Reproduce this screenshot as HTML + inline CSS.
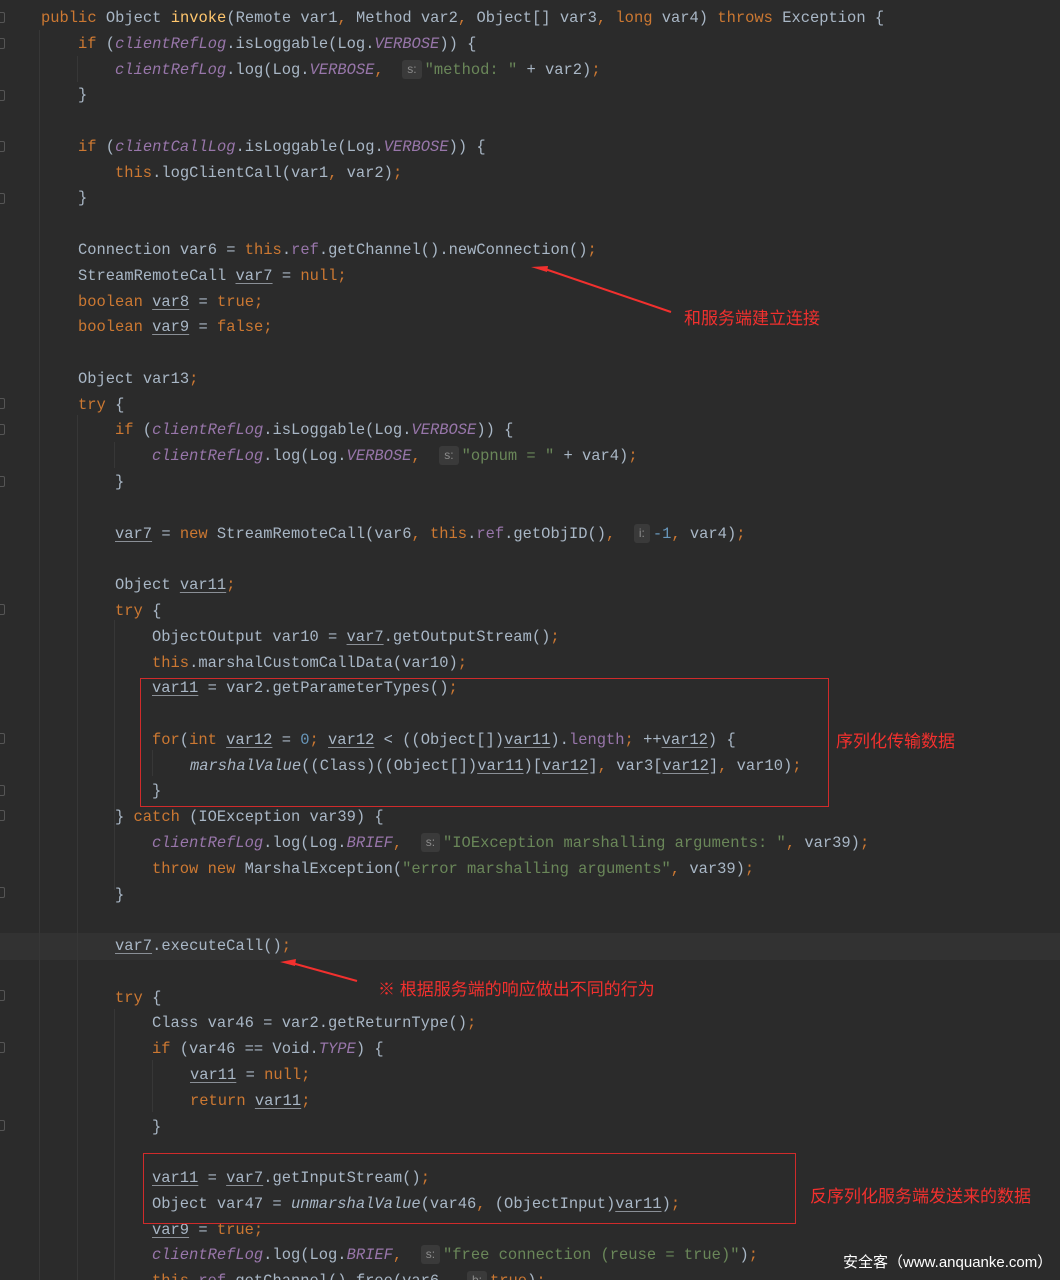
<!DOCTYPE html>
<html><head><meta charset="utf-8"><style>
html,body{margin:0;padding:0;background:#2b2b2b;width:1060px;height:1280px;overflow:hidden;position:relative}
.l{position:absolute;left:0;height:26px;line-height:26px;white-space:pre;font-family:"Liberation Mono",monospace;font-size:15.45px;color:#a9b7c6}
.k{color:#cc7832}.p{color:#9876aa;font-style:italic}.pf{color:#9876aa}.s{color:#6a8759}.n{color:#6897bb}.m{color:#ffc66d}.i{font-style:italic}
.u{text-decoration:underline;text-decoration-color:#8a8f96;text-underline-offset:3px}
.h{display:inline-block;background:#3a3a3a;color:#8c8c8c;font-family:"Liberation Sans",sans-serif;font-size:12px;line-height:19px;padding:0 5px;border-radius:3px;margin-right:3px;vertical-align:1px}
.g{position:absolute;width:1px;background:#373737}
.box{position:absolute;border:1px solid #d02b2b}
.a{position:absolute;color:#f2302e;font-family:"Liberation Sans","Noto Sans CJK SC",sans-serif;font-size:17px;white-space:nowrap}
.f{position:absolute;left:0;width:4px;height:9px;border:1px solid #555;border-left:none;border-radius:0 2px 2px 0}
</style></head><body>
<div style="position:absolute;left:0;top:933px;width:1060px;height:27px;background:#323232"></div>
<div class="g" style="left:39px;top:30px;height:1250px"></div>
<div class="g" style="left:77px;top:56px;height:26px"></div>
<div class="g" style="left:77px;top:415px;height:865px"></div>
<div class="g" style="left:114px;top:442px;height:26px"></div>
<div class="g" style="left:114px;top:620px;height:270px"></div>
<div class="g" style="left:114px;top:1009px;height:271px"></div>
<div class="g" style="left:152px;top:750px;height:26px"></div>
<div class="g" style="left:152px;top:1060px;height:52px"></div>
<div class="f" style="top:12px"></div><div class="f" style="top:38px"></div><div class="f" style="top:90px"></div>
<div class="f" style="top:141px"></div><div class="f" style="top:193px"></div><div class="f" style="top:398px"></div>
<div class="f" style="top:424px"></div><div class="f" style="top:476px"></div><div class="f" style="top:604px"></div>
<div class="f" style="top:733px"></div><div class="f" style="top:785px"></div><div class="f" style="top:810px"></div>
<div class="f" style="top:887px"></div><div class="f" style="top:990px"></div><div class="f" style="top:1042px"></div><div class="f" style="top:1120px"></div>

<div class="l" style="top:5px;left:41px"><span class="k">public </span>Object <span class="m">invoke</span>(Remote var1<span class="k">, </span>Method var2<span class="k">, </span>Object[] var3<span class="k">, long </span>var4) <span class="k">throws </span>Exception {</div>
<div class="l" style="top:31px;left:78px"><span class="k">if </span>(<span class="p">clientRefLog</span>.isLoggable(Log.<span class="p">VERBOSE</span>)) {</div>
<div class="l" style="top:57px;left:115px"><span class="p">clientRefLog</span>.log(Log.<span class="p">VERBOSE</span><span class="k">, </span> <span class="h">s:</span><span class="s">"method: "</span> + var2)<span class="k">;</span></div>
<div class="l" style="top:82px;left:78px">}</div>
<div class="l" style="top:134px;left:78px"><span class="k">if </span>(<span class="p">clientCallLog</span>.isLoggable(Log.<span class="p">VERBOSE</span>)) {</div>
<div class="l" style="top:160px;left:115px"><span class="k">this</span>.logClientCall(var1<span class="k">, </span>var2)<span class="k">;</span></div>
<div class="l" style="top:185px;left:78px">}</div>
<div class="l" style="top:237px;left:78px">Connection var6 = <span class="k">this</span>.<span class="pf">ref</span>.getChannel().newConnection()<span class="k">;</span></div>
<div class="l" style="top:263px;left:78px">StreamRemoteCall <span class="u">var7</span> = <span class="k">null;</span></div>
<div class="l" style="top:289px;left:78px"><span class="k">boolean </span><span class="u">var8</span> = <span class="k">true;</span></div>
<div class="l" style="top:314px;left:78px"><span class="k">boolean </span><span class="u">var9</span> = <span class="k">false;</span></div>
<div class="l" style="top:366px;left:78px">Object var13<span class="k">;</span></div>
<div class="l" style="top:392px;left:78px"><span class="k">try </span>{</div>
<div class="l" style="top:417px;left:115px"><span class="k">if </span>(<span class="p">clientRefLog</span>.isLoggable(Log.<span class="p">VERBOSE</span>)) {</div>
<div class="l" style="top:443px;left:152px"><span class="p">clientRefLog</span>.log(Log.<span class="p">VERBOSE</span><span class="k">, </span> <span class="h">s:</span><span class="s">"opnum = "</span> + var4)<span class="k">;</span></div>
<div class="l" style="top:469px;left:115px">}</div>
<div class="l" style="top:521px;left:115px"><span class="u">var7</span> = <span class="k">new </span>StreamRemoteCall(var6<span class="k">, this</span>.<span class="pf">ref</span>.getObjID()<span class="k">, </span> <span class="h">i:</span><span class="n">-1</span><span class="k">, </span>var4)<span class="k">;</span></div>
<div class="l" style="top:572px;left:115px">Object <span class="u">var11</span><span class="k">;</span></div>
<div class="l" style="top:598px;left:115px"><span class="k">try </span>{</div>
<div class="l" style="top:624px;left:152px">ObjectOutput var10 = <span class="u">var7</span>.getOutputStream()<span class="k">;</span></div>
<div class="l" style="top:650px;left:152px"><span class="k">this</span>.marshalCustomCallData(var10)<span class="k">;</span></div>
<div class="l" style="top:675px;left:152px"><span class="u">var11</span> = var2.getParameterTypes()<span class="k">;</span></div>
<div class="l" style="top:727px;left:152px"><span class="k">for</span>(<span class="k">int </span><span class="u">var12</span> = <span class="n">0</span><span class="k">; </span><span class="u">var12</span> &lt; ((Object[])<span class="u">var11</span>).<span class="pf">length</span><span class="k">; </span>++<span class="u">var12</span>) {</div>
<div class="l" style="top:753px;left:190px"><span class="i">marshalValue</span>((Class)((Object[])<span class="u">var11</span>)[<span class="u">var12</span>]<span class="k">, </span>var3[<span class="u">var12</span>]<span class="k">, </span>var10)<span class="k">;</span></div>
<div class="l" style="top:778px;left:152px">}</div>
<div class="l" style="top:804px;left:115px">} <span class="k">catch </span>(IOException var39) {</div>
<div class="l" style="top:830px;left:152px"><span class="p">clientRefLog</span>.log(Log.<span class="p">BRIEF</span><span class="k">, </span> <span class="h">s:</span><span class="s">"IOException marshalling arguments: "</span><span class="k">, </span>var39)<span class="k">;</span></div>
<div class="l" style="top:856px;left:152px"><span class="k">throw new </span>MarshalException(<span class="s">"error marshalling arguments"</span><span class="k">, </span>var39)<span class="k">;</span></div>
<div class="l" style="top:882px;left:115px">}</div>
<div class="l" style="top:933px;left:115px"><span class="u">var7</span>.executeCall()<span class="k">;</span></div>
<div class="l" style="top:985px;left:115px"><span class="k">try </span>{</div>
<div class="l" style="top:1010px;left:152px">Class var46 = var2.getReturnType()<span class="k">;</span></div>
<div class="l" style="top:1036px;left:152px"><span class="k">if </span>(var46 == Void.<span class="p">TYPE</span>) {</div>
<div class="l" style="top:1062px;left:190px"><span class="u">var11</span> = <span class="k">null;</span></div>
<div class="l" style="top:1088px;left:190px"><span class="k">return </span><span class="u">var11</span><span class="k">;</span></div>
<div class="l" style="top:1114px;left:152px">}</div>
<div class="l" style="top:1165px;left:152px"><span class="u">var11</span> = <span class="u">var7</span>.getInputStream()<span class="k">;</span></div>
<div class="l" style="top:1191px;left:152px">Object var47 = <span class="i">unmarshalValue</span>(var46<span class="k">, </span>(ObjectInput)<span class="u">var11</span>)<span class="k">;</span></div>
<div class="l" style="top:1217px;left:152px"><span class="u">var9</span> = <span class="k">true;</span></div>
<div class="l" style="top:1242px;left:152px"><span class="p">clientRefLog</span>.log(Log.<span class="p">BRIEF</span><span class="k">, </span> <span class="h">s:</span><span class="s">"free connection (reuse = true)"</span>)<span class="k">;</span></div>
<div class="l" style="top:1268px;left:152px"><span class="k">this</span>.<span class="pf">ref</span>.getChannel().free(var6<span class="k">, </span> <span class="h">b:</span><span class="k">true</span>)<span class="k">;</span></div>

<div class="box" style="left:140px;top:678px;width:687px;height:127px"></div>
<div class="box" style="left:143px;top:1153px;width:651px;height:69px"></div>

<svg style="position:absolute;left:0;top:0" width="1060" height="1280">
<polygon points="531,267 548,266 547,272" fill="#f2302e"/>
<line x1="545" y1="269" x2="671" y2="312" stroke="#f2302e" stroke-width="2"/>
<polygon points="280,962 296,959 295,966" fill="#f2302e"/>
<line x1="292" y1="963" x2="357" y2="981" stroke="#f2302e" stroke-width="2"/>
</svg>
<div class="a" style="left:684px;top:304px">和服务端建立连接</div>
<div class="a" style="left:836px;top:727px">序列化传输数据</div>
<div class="a" style="left:378px;top:975px">※ 根据服务端的响应做出不同的行为</div>
<div class="a" style="left:810px;top:1182px">反序列化服务端发送来的数据</div>
<div class="a" style="left:843px;top:1251px;color:#fff;font-size:15px">安全客（www.anquanke.com）</div>
</body></html>
